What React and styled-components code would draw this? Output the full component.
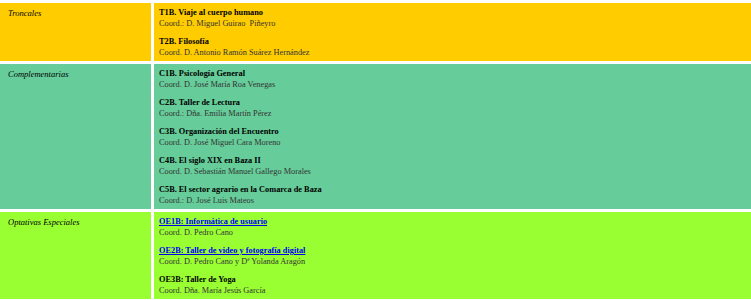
import React from "react";
import styled, { createGlobalStyle } from "styled-components";

const Global = createGlobalStyle`
  html, body { margin: 0; padding: 0; background: #ffffff; }
  body { font-family: "Liberation Serif", "Times New Roman", serif; }
`;

const Table = styled.div`
  display: grid;
  grid-template-columns: 151px 1fr;
  gap: 3px 3px;
  padding-top: 3px;
  width: 751px;
`;

const LabelCell = styled.div`
  background: ${(p) => p.$bg};
  padding: 5px 4px 3px 8px;
  font-size: 8.5px;
  line-height: 10.5px;
  font-style: italic;
  color: #000;
`;

const ContentCell = styled.div`
  background: ${(p) => p.$bg};
  padding: 5px 5px 3px 5px;
  font-size: 8.3px;
  line-height: 10.5px;
  display: flex;
  flex-direction: column;
  gap: 8px;
`;

const Item = styled.div`
  display: flex;
  flex-direction: column;
  align-items: flex-start;
`;

const Title = styled.span`
  font-weight: bold;
  color: #000;
`;

const TitleLink = styled.a`
  font-weight: bold;
  color: #0000ee;
  text-decoration: underline;
`;

const Coord = styled.span`
  color: #333;
`;

const groups = [
  {
    label: "Troncales",
    bg: "#ffcc00",
    items: [
      { t: "T1B. Viaje al cuerpo humano", c: "Coord.: D. Miguel Guirao\u00a0 Piñeyro" },
      { t: "T2B. Filosofía", c: "Coord. D. Antonio Ramón Suárez Hernández" },
    ],
  },
  {
    label: "Complementarias",
    bg: "#66cc99",
    items: [
      { t: "C1B. Psicología General", c: "Coord. D. José María Roa Venegas" },
      { t: "C2B. Taller de Lectura", c: "Coord.: Dña. Emilia Martín Pérez" },
      { t: "C3B. Organización del Encuentro", c: "Coord. D. José Miguel Cara Moreno" },
      { t: "C4B. El siglo XIX en Baza II", c: "Coord. D. Sebastián Manuel Gallego Morales" },
      { t: "C5B. El sector agrario en la Comarca de Baza", c: "Coord.: D. José Luis Mateos" },
    ],
  },
  {
    label: "Optativas Especiales",
    bg: "#99ff33",
    items: [
      { t: "OE1B: Informática de usuario", c: "Coord. D. Pedro Cano", link: true },
      { t: "OE2B: Taller de video y fotografía digital", c: "Coord. D. Pedro Cano y Dª Yolanda Aragón", link: true },
      { t: "OE3B: Taller de Yoga", c: "Coord. Dña. María Jesús García" },
    ],
  },
];

export default function App() {
  return (
    <>
      <Global />
      <Table>
        {groups.map((g) => (
          <React.Fragment key={g.label}>
            <LabelCell $bg={g.bg}>{g.label}</LabelCell>
            <ContentCell $bg={g.bg}>
              {g.items.map((it) => (
                <Item key={it.t}>
                  {it.link ? <TitleLink href="#">{it.t}</TitleLink> : <Title>{it.t}</Title>}
                  <Coord>{it.c}</Coord>
                </Item>
              ))}
            </ContentCell>
          </React.Fragment>
        ))}
      </Table>
    </>
  );
}
